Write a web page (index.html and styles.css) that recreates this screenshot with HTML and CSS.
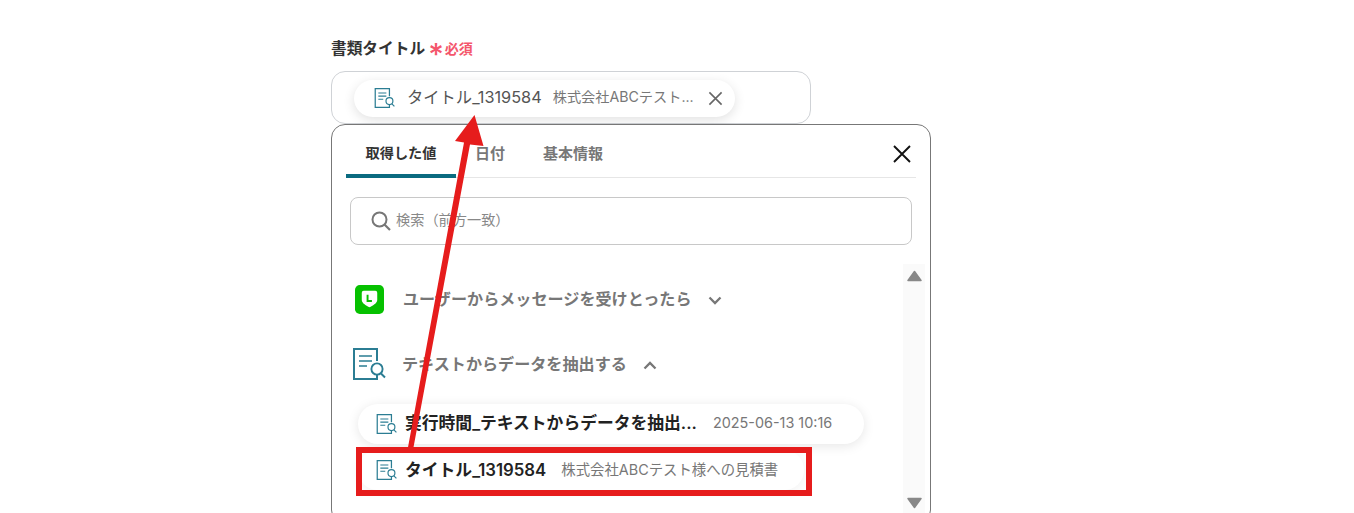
FILE: index.html
```html
<!DOCTYPE html>
<html lang="ja">
<head>
<meta charset="utf-8">
<title>書類タイトル</title>
<link rel="stylesheet" href="styles.css">
</head>
<body>
<svg width="0" height="0" class="defs"><defs>
<symbol id="doc" viewBox="0 0 34 34">
<path d="M25 14V2H2v30h23v-4" fill="none" stroke="#2b7d93" stroke-width="2"/>
<path d="M7 9h13M7 14h13M7 19h8" fill="none" stroke="#2b7d93" stroke-width="1.7"/>
<circle cx="25" cy="22" r="5.6" fill="#fff" stroke="#2b7d93" stroke-width="1.9"/>
<path d="M29 26.5l4 4" fill="none" stroke="#2b7d93" stroke-width="1.9"/>
</symbol>
</defs></svg>
<main class="page">
  <div class="label"><span class="txt title">書類タイトル</span><span class="star">*</span><span class="req txt">必須</span></div>
  <div class="input">
    <div class="chip">
      <svg class="ico20"><use href="#doc"/></svg>
      <span class="chip-name txt">タイトル_1319584</span>
      <span class="chip-val txt">株式会社ABCテスト...</span>
      <svg class="chip-x" viewBox="0 0 16 16"><path d="M1.500 1.500l13 13M14.500 1.500l-13 13" stroke="#666" stroke-width="1.700" fill="none"/></svg>
    </div>
  </div>
  <section class="panel">
    <div class="tabs">
      <div class="tab active">取得した値</div>
      <div class="tab">日付</div>
      <div class="tab">基本情報</div>
      <svg class="close" viewBox="0 0 18 18"><path d="M1 1l16 16M17 1L1 17" stroke="#111" stroke-width="1.9" fill="none"/></svg>
    </div>
    <div class="search">
      <svg class="search-ico" viewBox="0 0 20 20"><circle cx="8.5" cy="8.5" r="7" fill="none" stroke="#777" stroke-width="2"/><path d="M13.5 13.5l5.5 5.5" stroke="#777" stroke-width="2.2" fill="none"/></svg>
      <span class="txt">検索（前方一致）</span>
    </div>
    <div class="body">
      <div class="list">
        <div class="group">
          <svg class="line" viewBox="0 0 30 30"><rect width="30" height="30" rx="5" fill="#06c100"/><path d="M9 6h12a2 2 0 0 1 2 2v7.500c0 3.500-5 6-8 7.500-3-1.500-8-4-8-7.500V8a2 2 0 0 1 2-2z" fill="#fff"/><path d="M13 10v6.500h4.500" fill="none" stroke="#06c100" stroke-width="2"/></svg>
          <span class="group-name txt">ユーザーからメッセージを受けとったら</span>
          <svg class="chev" viewBox="0 0 14 9"><path d="M1.500 1.500L7 7l5.500-5.500" fill="none" stroke="#777" stroke-width="2.300"/></svg>
        </div>
        <div class="group second">
          <svg class="ico34"><use href="#doc"/></svg>
          <span class="group-name txt">テキストからデータを抽出する</span>
          <svg class="chev" viewBox="0 0 14 9"><path d="M1.500 7.500L7 2l5.500 5.500" fill="none" stroke="#777" stroke-width="2.300"/></svg>
        </div>
        <div class="item raised">
          <svg class="ico22"><use href="#doc"/></svg>
          <span class="item-name txt">実行時間_テキストからデータを抽出...</span>
          <span class="item-val date txt">2025-06-13 10:16</span>
        </div>
        <div class="item flat">
          <svg class="ico22"><use href="#doc"/></svg>
          <span class="item-name txt">タイトル_1319584</span>
          <span class="item-val note txt">株式会社ABCテスト様への見積書</span>
        </div>
      </div>
      <div class="scroll">
        <svg class="tri up" viewBox="0 0 15 12"><path d="M7.500 1.500L14 10.500H1z" fill="#888" stroke="#888" stroke-width="1.500" stroke-linejoin="round"/></svg>
        <svg class="tri down" viewBox="0 0 15 12"><path d="M7.500 10.500L14 1.500H1z" fill="#888" stroke="#888" stroke-width="1.500" stroke-linejoin="round"/></svg>
      </div>
    </div>
  </section>
</main>
<div class="highlight"></div>
<svg class="arrow" width="1354" height="513" viewBox="0 0 1354 513"><path d="M407.500 450L413 450L470 144.500L483.500 146L474.500 115L455 141L464 142.500z" fill="#e61c1c"/></svg>
</body>
</html>
```
FILE: styles.css
```css
* { box-sizing: border-box; }
html, body { margin: 0; height: 513px; overflow: hidden; background: #fff; }
body { font-family: Inter, "Noto Sans CJK JP", "Noto Sans", sans-serif; color: #333; position: relative; }
.defs { position: absolute; }
.page { width: 600px; margin-left: 331px; padding-top: 39px; }
.txt { line-height: 20px; padding-bottom: 2px; white-space: nowrap; }
.label { display: flex; align-items: center; height: 20px; font-size: 15.700px; font-weight: 700; color: #333; }
.label .title { padding-bottom: 0; }
.star { color: #f4566c; font-size: 30px; font-weight: 500; margin-left: 3px; line-height: 20px; padding-top: 10px; }
.req { color: #f4566c; font-size: 14px; font-weight: 600; margin-left: 1px; padding-bottom: 0; }
.input { width: 480px; height: 53px; margin-top: 12px; border: 1px solid #cfd2d6; border-radius: 14px; padding: 8px 0 0 22px; }
.chip { display: flex; align-items: center; width: 381px; height: 37px; border-radius: 19px; background: #fff; box-shadow: 0 3px 12px rgba(0,0,0,.12); padding: 0 0 1px 20px; }
.ico20 { width: 21px; height: 22px; flex: none; }
.chip-name { font-size: 16.300px; color: #555; margin-left: 12px; }
.chip-val { font-size: 14.200px; color: #777; margin-left: 11px; }
.chip-x { width: 15px; height: 15px; margin-left: 14px; flex: none; }
.panel { height: 400px; border: 1px solid #777; border-radius: 14px; overflow: hidden; background: #fff; }
.tabs { display: flex; position: relative; height: 53px; margin: 0 14px; border-bottom: 1px solid #e6e6e6; }
.tab { padding-top: 17px; font-size: 15px; font-weight: 600; color: #777; text-align: center; height: 53px; white-space: nowrap; }
.tab.active { width: 110px; font-size: 14.200px; color: #333; border-bottom: 4px solid #0a6b80; border-radius: 4px 4px 0 0; }
.tab:nth-child(2) { width: 68px; }
.tab:nth-child(3) { width: 78px; margin-left: 10px; }
.close { position: absolute; right: 5px; top: 20px; width: 18px; height: 18px; }
.search { display: flex; align-items: center; height: 48px; margin: 19px 18px 0; border: 1px solid #c8c8c8; border-radius: 8px; padding-left: 20px; font-size: 14.200px; color: #888; }
.search-ico { width: 20px; height: 20px; margin-right: 5px; flex: none; }
.body { display: flex; margin-top: 19px; height: 263px; }
.list { flex: 1; min-width: 0; padding: 3px 0 0 23px; }
.group { display: flex; align-items: center; height: 64px; font-size: 16.100px; font-weight: 600; color: #777; }
.group .txt { padding-bottom: 0; }
.group.second { height: 66px; }
.line { width: 29px; height: 29px; flex: none; margin-right: 19px; }
.ico34 { width: 34px; height: 34px; flex: none; margin: 0 16px 0 -3px; }
.chev { width: 14px; height: 9px; margin: 2px 0 0 16px; flex: none; }
.item { display: flex; align-items: center; height: 40px; width: 506px; margin-left: 3px; padding-left: 18px; border-radius: 20px; white-space: nowrap; }
.item.raised { margin-top: 7px; box-shadow: 0 2px 12px rgba(0,0,0,.1); }
.item.flat { margin-top: 6px; box-shadow: 0 2px 12px rgba(0,0,0,.06); width: 446px; }
.item.flat .txt { padding-bottom: 1px; }
.ico22 { width: 21px; height: 22px; flex: none; }
.item-name { font-size: 16.800px; font-weight: 600; color: #222; margin-left: 8px; }
.item-val { font-size: 14.400px; color: #777; margin-left: 15px; }
.item-val.date { margin-left: 16px; }
.scroll { position: relative; flex: none; width: 22px; margin: 0 5px 0 0; background: #fafafa; height: 263px; }
.tri { position: absolute; left: 4px; width: 15px; height: 12px; }
.tri.up { top: 6px; }
.tri.down { top: 233px; }
.highlight { position: absolute; left: 356px; top: 447px; width: 456px; height: 49px; border: 6px solid #e61c1c; }
.arrow { position: absolute; left: 0; top: 0; }
```
